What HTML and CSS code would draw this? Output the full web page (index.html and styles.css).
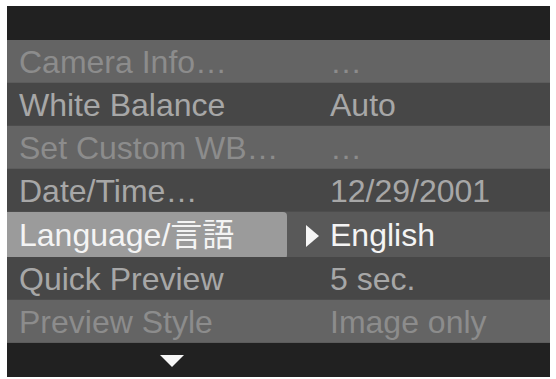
FILE: index.html
```html
<!DOCTYPE html>
<html>

<head>
    <meta charset="UTF-8">
    <meta name="viewport" content="width=device-width,initial-scale=1">
    <link rel="stylesheet" href="styles.css">
    <title>Setup Menu</title>
</head>

<body>
    <div class="screen">
        <div class="bar-top"></div>
        <div class="menu">
            <div class="row row-off">
                <span class="label">Camera Info…</span>
                <span class="value"><i class="mark"></i>…</span>
            </div>
            <div class="row">
                <span class="label">White Balance</span>
                <span class="value"><i class="mark"></i>Auto</span>
            </div>
            <div class="row row-off">
                <span class="label">Set Custom WB…</span>
                <span class="value"><i class="mark"></i>…</span>
            </div>
            <div class="row">
                <span class="label">Date/Time…</span>
                <span class="value"><i class="mark"></i>12/29/2001</span>
            </div>
            <div class="row row-active">
                <span class="label">Language/言語</span>
                <span class="value"><i class="mark"></i>English</span>
            </div>
            <div class="row">
                <span class="label">Quick Preview</span>
                <span class="value"><i class="mark"></i>5 sec.</span>
            </div>
            <div class="row row-off">
                <span class="label">Preview Style</span>
                <span class="value"><i class="mark"></i>Image only</span>
            </div>
        </div>
        <div class="bar-bottom">
            <span class="arrow-down"></span>
        </div>
    </div>
</body>

</html>
```

FILE: styles.css
```css
*,
*::before,
*::after {
    box-sizing: border-box;
    padding: 0;
    margin: 0;
}

body {
    background: #fff;
    font-family: "Liberation Sans", Arial, "Noto Sans CJK JP", sans-serif;
}

.screen {
    display: flex;
    flex-direction: column;
    width: 543px;
    height: 371px;
    margin: 6px 0 0 7px;
    background: #212121;
}

.bar-top {
    height: 34px;
    flex-shrink: 0;
}

.menu {
    display: flex;
    flex-direction: column;
}

.row {
    display: grid;
    grid-template-columns: 280px 1fr;
    height: 43px;
    background: #474747;
    color: #a7a7a7;
    font-size: 32px;
    line-height: 45px;
    border-bottom: 1px solid #4d4d4d;
}

.row-off {
    background: #646464;
    color: #8c8c8c;
    border-bottom-color: #5c5c5c;
}

.row-active {
    height: 45px;
    line-height: 47px;
    background: #595959;
    color: #f4f4f4;
    border-bottom: none;
}

.label {
    padding-left: 12px;
    white-space: nowrap;
    overflow: hidden;
}

.row-active .label {
    background: #9b9b9b;
    border-radius: 0 4px 4px 0;
}

.value {
    display: flex;
    align-items: center;
    padding-left: 19px;
    white-space: nowrap;
}

.mark {
    width: 24px;
    height: 22px;
    flex-shrink: 0;
}

.row-active .mark::before {
    content: "";
    display: block;
    width: 0;
    height: 0;
    border-top: 11px solid transparent;
    border-bottom: 11px solid transparent;
    border-left: 13px solid #f6f6f6;
}

.bar-bottom {
    display: flex;
    align-items: center;
    height: 35px;
    padding: 2px 0 0 153px;
}

.arrow-down {
    width: 0;
    height: 0;
    border-left: 12px solid transparent;
    border-right: 12px solid transparent;
    border-top: 12px solid #f6f6f6;
}
```
